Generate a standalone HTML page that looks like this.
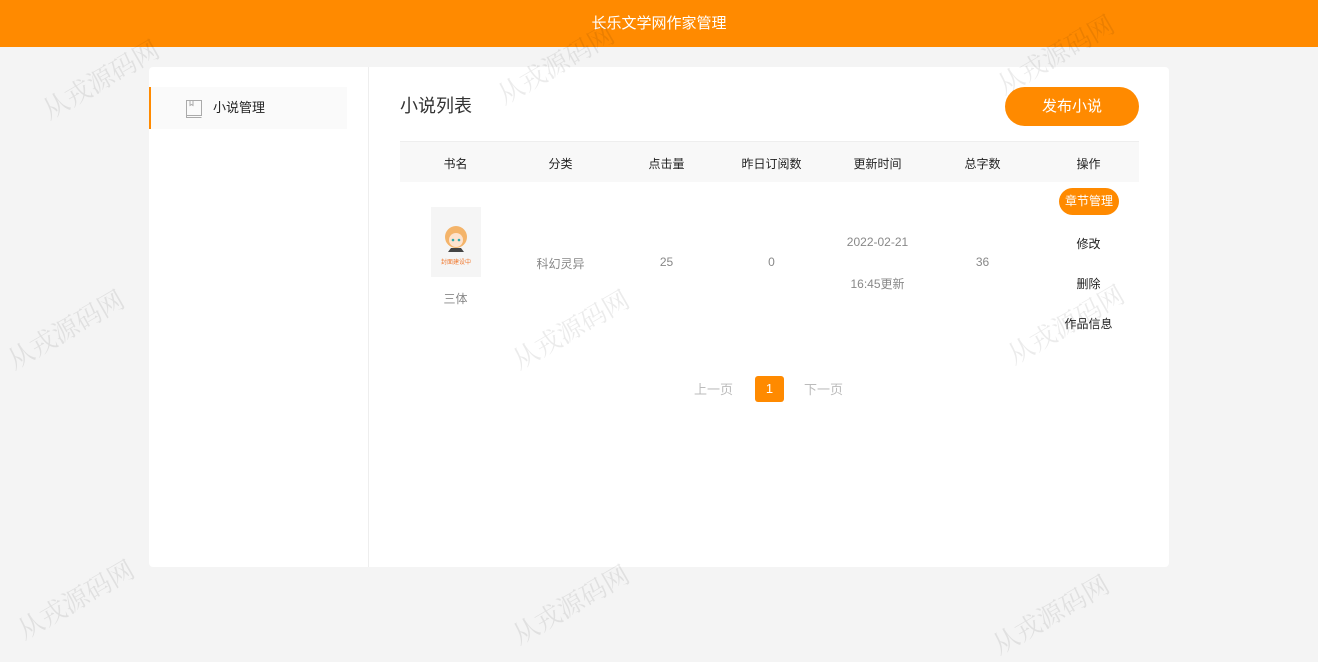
<!DOCTYPE html>
<html><head><meta charset="utf-8">
<style>
*{margin:0;padding:0;box-sizing:border-box}
body{width:1318px;height:654px;background:#f4f4f4;font-family:"Liberation Sans","Noto Sans CJK SC",sans-serif;position:relative;overflow:hidden;color:#333}
.top{height:47px;background:#ff8a00;color:#fff;text-align:center;line-height:47px;font-size:15px}
.card{position:absolute;left:149px;top:67px;width:1020px;height:500px;background:#fff;border-radius:4px}
.side{position:absolute;left:0;top:0;width:220px;height:500px;border-right:1px solid #eee}
.menu{position:absolute;left:0;top:20px;width:198px;height:42px;background:#fafafa;border-left:2px solid #ff8a00;font-size:13px;line-height:42px;padding-left:62px;color:#222}
.menu svg{position:absolute;left:34px;top:12px}
.title{position:absolute;left:251px;top:25px;font-size:18px;color:#333}
.btn{position:absolute;left:856px;top:20px;width:134px;height:39px;border-radius:20px;background:#ff8a00;color:#fff;font-size:15px;text-align:center;line-height:39px}
.thead{position:absolute;left:251px;top:74px;width:739px;height:41px;background:#f8f8f8;border-top:1px solid #eee;font-size:12px;color:#222}
.c{position:absolute;text-align:center;width:105px}
.row{position:absolute;left:251px;top:115px;width:739px;font-size:12px;color:#888}
.cover{position:absolute;left:31px;top:25px;width:50px;height:70px;background:#f5f5f5}
.tag{position:absolute;left:659px;top:6px;width:60px;height:27px;border-radius:14px;background:#ff8a00;color:#fff;text-align:center;line-height:27px;font-size:12px}
.op{color:#222}
.page{position:absolute;top:312px;font-size:13px;color:#bbb}
.p1{position:absolute;left:606px;top:309px;width:29px;height:26px;background:#ff8a00;color:#fff;border-radius:3px;text-align:center;line-height:26px;font-size:13px}
.wm{position:absolute;font-size:26px;color:rgba(0,0,0,0.08);transform:rotate(-30deg);white-space:nowrap;font-family:"Noto Serif CJK SC",serif}
</style></head><body>
<div class="top">长乐文学网作家管理</div>
<div class="card">
 <div class="side"><div class="menu"><svg width="18" height="20" viewBox="0 0 18 20" fill="none" stroke="#aaa" stroke-width="1"><path d="M1.5 1.5h15v15h-15z M1.5 16.5v2h15 M5 1.5v5l1.5-1 1.5 1v-5"/></svg>小说管理</div></div>
 <div class="title">小说列表</div>
 <div class="btn">发布小说</div>
 <div class="thead">
  <div class="c" style="left:3px;top:13px">书名</div>
  <div class="c" style="left:108px;top:13px">分类</div>
  <div class="c" style="left:214px;top:13px">点击量</div>
  <div class="c" style="left:319px;top:13px">昨日订阅数</div>
  <div class="c" style="left:425px;top:13px">更新时间</div>
  <div class="c" style="left:530px;top:13px">总字数</div>
  <div class="c" style="left:636px;top:13px">操作</div>
 </div>
 <div class="row">
  <div class="cover"><svg width="50" height="70" viewBox="0 0 50 70"><circle cx="25" cy="30" r="11" fill="#f4b46a"/><circle cx="25" cy="33" r="7" fill="#fde3cf"/><circle cx="22" cy="33" r="1.3" fill="#3aa"/><circle cx="28" cy="33" r="1.3" fill="#3aa"/><path d="M17 45h16l-3-4h-10z" fill="#444"/><text x="25" y="57" font-size="6" fill="#f07a30" text-anchor="middle" font-family="Noto Sans CJK SC">封面建设中</text></svg></div>
  <div class="c" style="left:3px;top:108px">三体</div>
  <div class="c" style="left:108px;top:73px">科幻灵异</div>
  <div class="c" style="left:214px;top:73px">25</div>
  <div class="c" style="left:319px;top:73px">0</div>
  <div class="c" style="left:425px;top:53px">2022-02-21</div>
  <div class="c" style="left:425px;top:93px">16:45更新</div>
  <div class="c" style="left:530px;top:73px">36</div>
  <div class="tag">章节管理</div>
  <div class="c op" style="left:636px;top:53px">修改</div>
  <div class="c op" style="left:636px;top:93px">删除</div>
  <div class="c op" style="left:636px;top:133px">作品信息</div>
 </div>
 <div class="page" style="left:545px">上一页</div>
 <div class="p1">1</div>
 <div class="page" style="left:655px">下一页</div>
</div>
<div class="wm" style="left:35px;top:60px">从戎源码网</div>
<div class="wm" style="left:490px;top:45px">从戎源码网</div>
<div class="wm" style="left:990px;top:35px">从戎源码网</div>
<div class="wm" style="left:0px;top:310px">从戎源码网</div>
<div class="wm" style="left:505px;top:310px">从戎源码网</div>
<div class="wm" style="left:1000px;top:305px">从戎源码网</div>
<div class="wm" style="left:10px;top:580px">从戎源码网</div>
<div class="wm" style="left:505px;top:585px">从戎源码网</div>
<div class="wm" style="left:985px;top:595px">从戎源码网</div>
</body></html>
